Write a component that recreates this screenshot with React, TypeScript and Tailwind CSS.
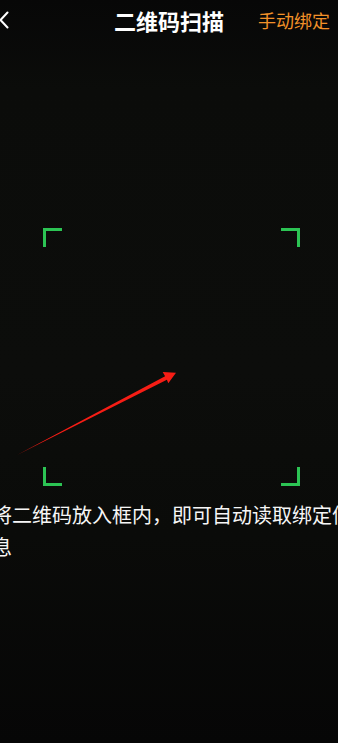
import React from 'react';

const cjk = { fontFamily: '"Noto Sans CJK SC", "Noto Sans", sans-serif' };

function Corner({ pos }: { pos: 'tl' | 'tr' | 'bl' | 'br' }) {
  const place = {
    tl: 'top-0 left-0 border-t-[3px] border-l-[3px]',
    tr: 'top-0 right-0 border-t-[3px] border-r-[3px]',
    bl: 'bottom-0 left-0 border-b-[3px] border-l-[3px]',
    br: 'bottom-0 right-0 border-b-[3px] border-r-[3px]',
  }[pos];
  return <div className={`absolute w-[19px] h-[19px] border-[#2cc454] ${place}`} />;
}

export default function App() {
  return (
    <div
      className="relative w-[338px] h-[743px] overflow-hidden bg-[linear-gradient(180deg,#070707_0%,#0b0c0a_12%,#0c0d0b_50%,#0a0b09_72%,#060606_100%)] text-white"
      style={cjk}
    >
      {/* header */}
      <div className="grid grid-cols-[1fr_auto_1fr] items-center h-10">
        <div className="flex items-center">
          <svg width="10" height="18" viewBox="0 0 10 18" className="-ml-[1px]">
            <path d="M8.5 1.5 L1.5 9 L8.5 16.5" fill="none" stroke="#fff" strokeWidth="2" strokeLinecap="round" strokeLinejoin="round" />
          </svg>
        </div>
        <div className="text-[22px] font-bold leading-none">二维码扫描</div>
        <div className="flex justify-end pr-[8px] text-[18px] leading-none text-[#f29129]">手动绑定</div>
      </div>

      {/* scan frame */}
      <div className="relative ml-[43px] mt-[188px] w-[257px] h-[258px]">
        <Corner pos="tl" />
        <Corner pos="tr" />
        <Corner pos="bl" />
        <Corner pos="br" />
      </div>

      {/* hint */}
      <div className="ml-[-8px] mt-[13px] w-[366px] text-[20px] leading-[32px] text-[#f6f6f6]">
        将二维码放入框内，即可自动读取绑定信息
      </div>

      {/* annotation arrow */}
      <svg className="absolute inset-0 pointer-events-none" width="338" height="743" viewBox="0 0 338 743">
        <polygon
          points="17,455 165.1,376.2 162.7,372 176,372.7 168.3,383.3 166.9,379.8"
          fill="#f61d15"
        />
      </svg>
    </div>
  );
}
